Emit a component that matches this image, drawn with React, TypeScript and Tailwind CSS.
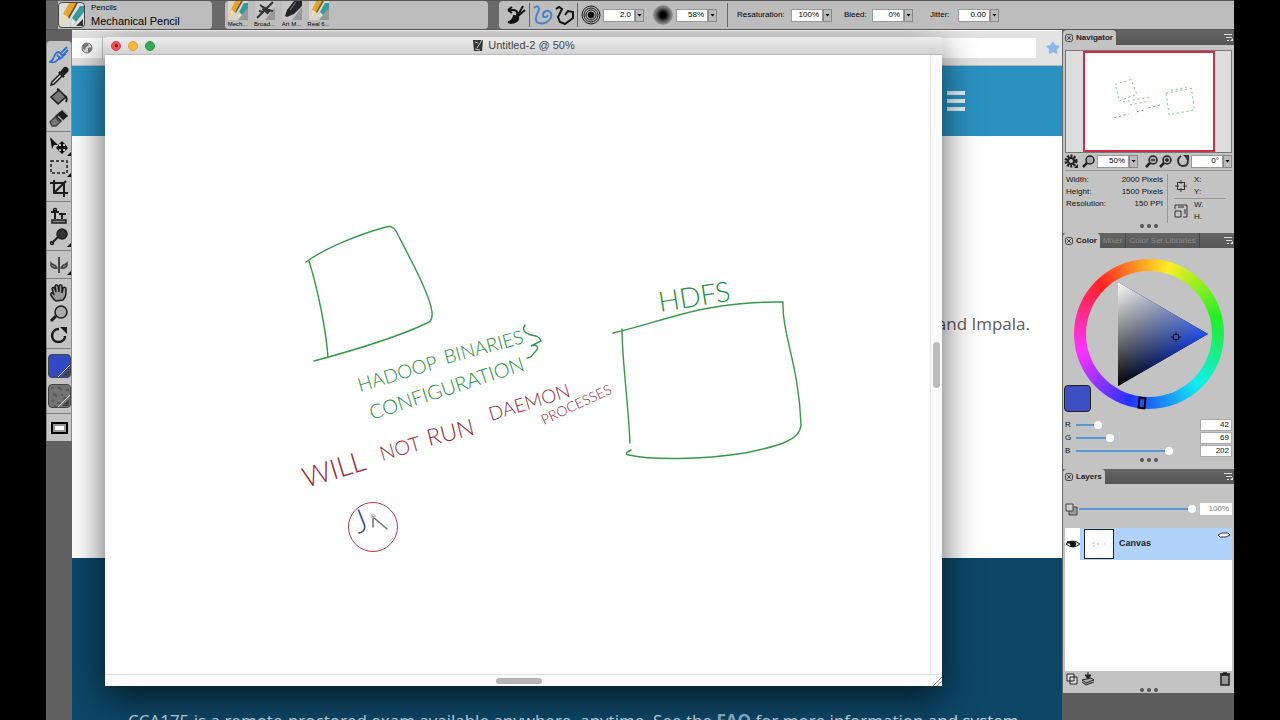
import type { ReactNode } from 'react';
import { Star } from 'lucide-react';

const swatches = [
  { name: 'Mech...', kind: 'pencil' },
  { name: 'Broad...', kind: 'airbrush' },
  { name: 'Art M...', kind: 'marker' },
  { name: 'Real 6...', kind: 'pencil' },
];

const channels = [
  { name: 'R', value: 42 },
  { name: 'G', value: 69 },
  { name: 'B', value: 202 },
];

function Svg({ size = 20, children }: { size?: number; children: ReactNode }) {
  return (
    <svg width={size} height={size} viewBox="0 0 20 20" fill="none" stroke="#1c1c1c" strokeWidth="1.5">
      {children}
    </svg>
  );
}

const toolGroups: { name: string; icon: ReactNode; more?: boolean }[][] = [
  [
    {
      name: 'Brush',
      icon: (
        <g stroke="#2f6fd6" strokeWidth="1.8">
          <path d="M18 2 12 8M19 5l-5 5M10 7c-3 0-4 2-5 5s-2 4-4 5c3 1 7 0 8-3M10 7l4 4c-1 2-3 3-5 3M8 10l3 3M17 9l-4 2" />
        </g>
      ),
    },
    {
      name: 'Dropper',
      icon: (
        <g>
          <path d="m11 8-8 8-1 3 3-1 8-8" fill="#ddd" />
          <path d="m10 6 5 5M12 7l3-4c2-2 4 0 3 2l-4 4z" fill="#1c1c1c" strokeWidth="2.5" />
        </g>
      ),
    },
    {
      name: 'Paint Bucket',
      icon: (
        <g>
          <path d="m2 10 8-7 7 7-8 7z" fill="#777" />
          <path d="m10 3-2-1M16 9c2 1 2 4 1 6" strokeWidth="2" />
        </g>
      ),
    },
    {
      name: 'Eraser',
      icon: (
        <g>
          <path d="m1 14 5-5 5 5-4 4H3z" fill="#777" stroke="#444" />
          <path d="m7 8 6-5 5 5-6 5z" fill="#1c1c1c" />
          <path d="m9 8 5 5M14 2l4 4" stroke="#aaa" />
        </g>
      ),
    },
  ],
  [
    {
      name: 'Layer Adjuster',
      more: true,
      icon: (
        <g fill="#111" stroke="none">
          <path d="m1 1 8 8-4 0-2 4z" />
          <path d="m13 5 3 3h-2v2h2V8l3 4-3 3v-2h-2v2h2l-3 3-3-3h2v-2h-2v2l-3-3 3-4v2h2V8h-2z" />
        </g>
      ),
    },
    {
      name: 'Rectangular Selection',
      more: true,
      icon: <path d="M2 4h16v12H2z" strokeDasharray="3 2" />,
    },
    {
      name: 'Crop',
      icon: <path d="M5 2v13h14M1 5h14v14M5 15 17 3" strokeWidth="2" />,
    },
  ],
  [
    {
      name: 'Cloner',
      icon: (
        <g>
          <path d="M3 14h14v3H3z" fill="#888" />
          <path d="M6 13V4M2 6h8M13 13V8M10 8h7" strokeWidth="2" />
          <circle cx="6" cy="4" r="1.5" />
        </g>
      ),
    },
    {
      name: 'Dodge',
      more: true,
      icon: (
        <g>
          <circle cx="13" cy="7" r="5" fill="#333" />
          <path d="m9 10-6 6" strokeWidth="2" />
          <circle cx="3" cy="16" r="1.5" />
        </g>
      ),
    },
  ],
  [
    {
      name: 'Mirror Painting',
      more: true,
      icon: (
        <g>
          <path d="M10 2v16" />
          <path d="M8 13C5 14 1 12 2 8c1 2 4 0 6 5zM12 13c3 1 7-1 6-5-1 2-4 0-6 5z" fill="#888" stroke="#444" />
        </g>
      ),
    },
  ],
  [
    {
      name: 'Grabber',
      icon: (
        <path
          d="M7 18c-3-2-6-6-5-8 1-1 3 1 3 2L3 6c0-2 2-2 3 0l1 3-1-6c1-2 2-1 3 0l1 6 0-6c1-2 3-1 3 0l0 7 1-5c1-1 3-1 3 1 0 5 0 8-3 11z"
          fill="#999"
        />
      ),
    },
    {
      name: 'Magnifier',
      icon: (
        <g>
          <circle cx="12" cy="8" r="6" fill="#aaa" />
          <path d="m7 12-5 5" strokeWidth="3" />
        </g>
      ),
    },
    {
      name: 'Rotate Page',
      icon: (
        <g>
          <path d="M10 4c-9 0-9 13-1 13 5 0 7-3 7-6" strokeWidth="2.5" />
          <path d="M11 2h7v7z" fill="#1c1c1c" stroke="none" />
        </g>
      ),
    },
  ],
];

function Toolbar() {
  return (
    <aside className="w-[26px] shrink-0 bg-[#606060] pt-[11px]">
      <div className="rounded-t border-x border-[#8b8b8b] bg-[#c3c3c3]">
        {toolGroups.map((group) => (
          <div key={group[0].name} className="flex flex-col border-b border-[#7d7d7d] py-[3px]">
            {group.map((tool) => (
              <button key={tool.name} aria-label={tool.name} className="relative flex h-[21px] items-center justify-center">
                <Svg>{tool.icon}</Svg>
                {tool.more && (
                  <span className="absolute right-0 bottom-0 h-1 w-1 bg-black [clip-path:polygon(100%_0,100%_100%,0_100%)]" />
                )}
              </button>
            ))}
          </div>
        ))}
        <div className="flex flex-col items-center gap-[6px] border-b border-[#7d7d7d] py-[5px]">
          <button aria-label="Main color" className="relative h-6 w-[23px] overflow-hidden rounded border border-[#444] bg-[#3348c5]">
            <Corner />
          </button>
          <button aria-label="Paper texture" className="relative h-6 w-[23px] overflow-hidden rounded border border-[#444] bg-[#747474]">
            <svg className="absolute inset-0" width="23" height="24" stroke="#595959" strokeWidth="2" fill="none">
              <path d="M2 3h3M9 2l4 3M17 5h3M4 9l4 2M12 10h2M3 17l2-2M8 18h4M14 14l3-2M5 21l3 1" />
            </svg>
            <Corner />
          </button>
        </div>
        <div className="py-[3px]">
          <button aria-label="Screen mode" className="flex h-[21px] w-full items-center justify-center">
            <span className="h-3 w-[17px] border-2 border-black bg-white outline-2 -outline-offset-4 outline-[#999]" />
          </button>
        </div>
      </div>
    </aside>
  );
}

function Corner() {
  return (
    <svg className="absolute right-0 bottom-0" width="12" height="12" viewBox="0 0 12 12">
      <path d="M0 12 12 0" stroke="#ddd" />
      <path d="M4 11h7V4z" fill="#444" />
    </svg>
  );
}

function BrushArt({ kind }: { kind: string }) {
  return (
    <svg width="20" height="19" viewBox="0 0 20 19">
      <rect width="20" height="19" fill={kind === 'pencil' ? '#d9d5cb' : '#c6c6c6'} />
      <path d="M10 19 20 6v13z" fill="#999" />
      {kind === 'pencil' && (
        <g>
          <path d="M7 0h6L7 11l-5 6 1-8z" fill="#e2a52d" />
          <path d="M13 0h2L8 12l-1-1z" fill="#76551f" />
          <path d="m3 9 4 2-5 6z" fill="#f3dfb4" />
          <path d="M16 2h4v5l-6 7-5 4 2-7z" fill="#359a9b" />
          <path d="m11 11 3 3-5 4z" fill="#f0e6cf" />
        </g>
      )}
      {kind === 'airbrush' && (
        <g stroke="#333" strokeWidth="2">
          <path d="M2 17 18 1M5 4l7 5 6 1M4 10l5 1" />
          <path d="M8 7l6 5" strokeWidth="4" />
        </g>
      )}
      {kind === 'marker' && (
        <g>
          <path d="M12 0h8v5l-8 8-7 3-2-1 2-6z" fill="#24242a" />
          <path d="m14 1-6 8" stroke="#888" />
        </g>
      )}
    </svg>
  );
}

function NumberField({ label, value }: { label: string; value: string }) {
  return (
    <div className="flex h-[13px] shrink-0">
      <input aria-label={label} defaultValue={value} className="w-8 border border-[#999] bg-white pr-[3px] text-right text-[8px] text-black" />
      <button aria-label={`${label} options`} className="flex w-[9px] items-center justify-center border border-[#888] bg-[#bbb]">
        <span className="h-[3px] w-[5px] shrink-0 bg-black [clip-path:polygon(0_0,100%_0,50%_100%)]" />
      </button>
    </div>
  );
}

function Separator() {
  return <span className="h-6 w-px shrink-0 bg-[#666]" />;
}

function PropertyBar() {
  return (
    <header className="flex h-[30px] shrink-0 border-t border-b border-t-[#555] border-b-[#555] bg-[#696969] pl-3 text-[8px] text-black">
      <button className="flex w-[154px] shrink-0 items-center gap-[6px] rounded-r bg-[#bdbdbd] text-left">
        <span className="relative h-[26px] w-[27px] overflow-hidden rounded border border-[#444] bg-[#ddd]">
          <svg width="25" height="25" viewBox="0 0 25 25">
            <path d="M10 0h7L9 14l-6 8 1-11z" fill="#e5a52e" />
            <path d="M17 0h2L10 16l-1-2z" fill="#76551f" />
            <path d="m4 11 5 3-6 8z" fill="#f3dfb4" />
            <path d="M21 3h4v6l-8 10-6 5 2-9z" fill="#359a9b" />
            <path d="m13 15 4 4-6 5z" fill="#f0e6cf" />
            <path d="M17 23h7v-7z" fill="#333" />
          </svg>
        </span>
        <span>
          <span className="block leading-3">Pencils</span>
          <span className="block text-[11px] leading-[14px]">Mechanical Pencil</span>
        </span>
      </button>

      <div className="ml-[13px] flex w-[263px] shrink-0 gap-1 rounded bg-[#bdbdbd] pl-px">
        {swatches.map((brush) => (
          <button key={brush.name} className="flex w-[23px] flex-col items-center text-[6px] leading-[8px] whitespace-nowrap">
            <BrushArt kind={brush.kind} />
            {brush.name}
          </button>
        ))}
      </div>

      <div className="ml-[11px] flex flex-1 items-center rounded-l bg-[#bdbdbd] pl-[7px]">
        <button aria-label="Reset brush" className="mr-[3px]">
          <svg width="20" height="20" viewBox="0 0 20 20" fill="none" stroke="#111" strokeWidth="2">
            <path d="M8 5H2M2 5l4-3M2 5l4 3M8 5c4 1 4 4 2 7M17 1l-5 9M19 5l-7 6-3 1" />
            <path d="m8 11 4 1c1 3-2 6-7 6l-3-1c4 0 5-3 6-6z" fill="#111" />
          </svg>
        </button>
        <Separator />
        <button aria-label="Freehand strokes" className="ml-[3px]">
          <svg width="20" height="20" viewBox="0 0 20 20" fill="none" stroke="#4b83c6" strokeWidth="2">
            <path d="M1 3c4-4 6 0 4 4s-4 10 1 11c8 2 14-5 12-10-2-4-8-2-8 2 0 3 4 3 5 0" />
          </svg>
        </button>
        <button aria-label="Straight line strokes" className="mr-[2px] ml-[2px]">
          <svg width="20" height="20" viewBox="0 0 20 20" fill="none" stroke="#111" strokeWidth="2">
            <path d="M1 4 4 2l3 2-4 8 2 5 5 2 8-6 0-6-5-1-3 4" />
          </svg>
        </button>
        <Separator />
        <span className="mr-[2px] ml-[3px]">
          <svg width="20" height="20" viewBox="0 0 20 20" fill="none" stroke="#111">
            <circle cx="10" cy="10" r="9" />
            <circle cx="10" cy="10" r="7" />
            <circle cx="10" cy="10" r="5" />
            <circle cx="10" cy="10" r="3" fill="#111" />
          </svg>
        </span>
        <NumberField label="Size" value="2.0" />
        <span className="mr-[3px] ml-[9px] h-5 w-5 rounded-full bg-[radial-gradient(circle,#000_20%,#666_50%,#999_70%)]" />
        <NumberField label="Opacity" value="58%" />
        <span className="mr-[9px] ml-[10px] flex">
          <Separator />
        </span>
        <span className="w-[54px]">Resaturation:</span>
        <NumberField label="Resaturation" value="100%" />
        <span className="ml-3 w-7">Bleed:</span>
        <NumberField label="Bleed" value="0%" />
        <span className="ml-[17px] w-7">Jitter:</span>
        <NumberField label="Jitter" value="0.00" />
      </div>
    </header>
  );
}

function Sketch() {
  return (
    <svg width="825" height="619" viewBox="105 55 825 619" fill="none" strokeLinecap="round" className="shrink-0">
      <g stroke="#369b48" strokeWidth="1.4">
        <path d="M306 262C325 248 360 234 386 227q6-2 10 4C412 262 430 295 432 312q1 9-5 11C400 336 355 350 314 361" />
        <path d="M309 261C318 290 326 330 328 357" />
        <path d="M613 333C660 323 700 301 783 302C782 335 799 365 801 425C800 440 780 446 745 453C700 460 650 460 629 455q-6-1 2-5" />
        <path d="M622 329C622 360 628 400 630 443" />
        <path d="M525 325c-4 6 1 8 6 10 5 1 8 1 10 6l-10 5c6-2 9 1 4 6-4 3-1 5-8 6" />
      </g>
      <g fill="#238f3c" className="font-['Lato'] text-[19px] font-light">
        <text transform="translate(360 392) rotate(-17)">HADOOP</text>
        <text transform="translate(446 364) rotate(-15)">BINARIES</text>
        <text transform="translate(372 420) rotate(-18)" className="text-[20px]">CONFIGURATION</text>
        <text transform="translate(660 312) rotate(-9)" className="text-[28px]">HDFS</text>
      </g>
      <g fill="#9d2636" className="font-['Lato'] text-[23px] font-light">
        <text transform="translate(306 488) rotate(-17)" className="text-[28px]">WILL</text>
        <text transform="translate(382 461) rotate(-16)" className="text-[20px]">NOT</text>
        <text transform="translate(429 446) rotate(-14)">RUN</text>
        <text transform="translate(491 421) rotate(-17)" className="text-[19px]">DAEMON</text>
        <text transform="translate(544 425) rotate(-25)" className="text-[14px]">PROCESSES</text>
      </g>
      <text transform="translate(358 534) rotate(-22)" fill="#344a9e" className="font-['Lato'] text-[32px] font-light">J</text>
      <path d="M373 527v-10l14 12" stroke="#777" strokeWidth="1.6" />
      <circle cx="373" cy="516" r="2" stroke="#bbb" />
      <circle cx="373" cy="527" r="24.5" stroke="#bd3340" />
    </svg>
  );
}

function Thumbnail() {
  return (
    <svg className="h-full w-full" viewBox="0 0 131 99" fill="none" strokeWidth="1" strokeDasharray="2 3">
      <g stroke="#7db487">
        <path d="M31 32 47 27l6 15-18 7zM83 41l26-5 3 22-26 5-3-22" />
        <path d="M88 38l16-3M39 50l26-5M46 53l20-4" />
      </g>
      <path d="M30 66l15-4M53 60l9-2M65 56l12-3" stroke="#b5697a" />
    </svg>
  );
}

function DocumentWindow() {
  return (
    <section className="absolute top-[7px] right-[120px] bottom-[34px] left-[33px] flex flex-col overflow-hidden rounded-t bg-white shadow-[0_12px_36px_rgba(0,0,0,0.65)]">
      <div className="flex h-[18px] shrink-0 items-center border-b border-[#bbb] bg-linear-to-b from-[#ededed] to-[#d2d2d2] px-[6px]">
        <div className="flex w-16 gap-[7px]">
          <button aria-label="Close" className="flex h-[10px] w-[10px] items-center justify-center rounded-full border border-[#cf4048] bg-[#f0535c]">
            <span className="h-[3px] w-[3px] rounded-full bg-[#640d12]" />
          </button>
          <button aria-label="Minimize" className="h-[10px] w-[10px] rounded-full border border-[#dda135] bg-[#f6b83c]" />
          <button aria-label="Zoom" className="h-[10px] w-[10px] rounded-full border border-[#2b9843] bg-[#34ad4e]" />
        </div>
        <h1 className="flex flex-1 items-center justify-center gap-1 pr-16 text-[11px] text-[#444]">
          <svg width="12" height="13" viewBox="0 0 12 13">
            <path d="M1 1h10l-1 11H2z" fill="#333" />
            <path d="M10 1 5 9M3 3l3 1M3 10l5 1" stroke="#ccc" />
          </svg>
          Untitled-2 @ 50%
        </h1>
      </div>
      <div className="flex min-h-0 flex-1">
        <div className="min-w-0 flex-1 overflow-hidden">
          <Sketch />
        </div>
        <div className="flex w-3 items-center justify-center border-l border-[#e6e6e6] bg-[#fafafa]">
          <span className="h-[46px] w-[7px] rounded-full bg-[#bcbcbc]" />
        </div>
      </div>
      <div className="flex h-3 shrink-0 items-center justify-center border-t border-[#e0e0e0] bg-[#fafafa]">
        <span className="ml-auto h-[6px] w-[46px] rounded-full bg-[#b5b5b5]" />
        <svg className="ml-auto" width="10" height="10" viewBox="0 0 10 10" stroke="#888">
          <path d="M1 10 10 1M5 10l5-5" />
        </svg>
      </div>
    </section>
  );
}

function Workspace() {
  return (
    <main className="relative flex min-w-0 flex-1 flex-col overflow-hidden">
      {/* Browser behind the drawing window */}
      <div className="flex h-9 shrink-0 items-center border-t border-b border-t-white border-b-[#b5b5b5] bg-[#e3e3e3]">
        <div className="flex h-5 min-w-0 flex-1 items-center bg-white pl-2">
          <svg width="14" height="14" viewBox="0 0 14 14">
            <circle cx="7" cy="7" r="5" fill="#ddd" stroke="#777" />
            <path d="M3 4l4-2 2 2-3 2-1 3-2-1zM8 7l4-1-1 4-3 2z" fill="#777" />
          </svg>
          <input aria-label="Address" className="ml-2 min-w-0 flex-1 border-l border-[#ccc]" />
        </div>
        <button aria-label="Bookmark" className="ml-2 flex w-[18px] justify-center">
          <Star size={14} fill="#86b8ee" color="#86b8ee" />
        </button>
      </div>
      <div className="flex h-[70px] shrink-0 items-center justify-end bg-[#2a91c1] pr-[97px]">
        <button aria-label="Menu" className="flex w-[18px] flex-col gap-[4px]">
          <span className="h-[4px] bg-[#e4f1f7]" />
          <span className="h-[4px] bg-[#e4f1f7]" />
          <span className="h-[4px] bg-[#e4f1f7]" />
        </button>
      </div>
      <div className="flex flex-1 items-center justify-end bg-white pr-8 pb-[46px] font-['Open_Sans'] text-[17px] text-[#5c5c5c]">
        <p>and Impala.</p>
      </div>
      <footer className="h-[162px] shrink-0 bg-[#0d4767] px-14 pt-[151px] font-['Open_Sans'] text-[17px] leading-6 whitespace-nowrap text-[#c3d8e4]">
        <p>
          CCA175 is a remote-proctored exam available anywhere, anytime. See the{' '}
          <a href="#faq" className="font-bold text-[#8ab5cd]">FAQ</a> for more information and system
        </p>
      </footer>
      <DocumentWindow />
    </main>
  );
}

function PanelHeader({ title, others = [] }: { title: string; others?: string[] }) {
  return (
    <div className="flex h-[15px] shrink-0 items-stretch bg-linear-to-b from-[#666] to-[#555] text-[8px] font-bold">
      <button className="flex items-center gap-[3px] rounded-t bg-[#c3c3c3] pr-[3px] pl-[2px] text-[#222]">
        <svg width="8" height="8" viewBox="0 0 8 8" fill="none" stroke="#444">
          <rect x=".5" y=".5" width="7" height="7" rx="2" />
          <path d="m2 2 4 4M6 2 2 6" />
        </svg>
        {title}
      </button>
      {others.map((name) => (
        <button key={name} className="border-r border-[#444] px-[3px] font-normal text-[#8c8c8c]">
          {name}
        </button>
      ))}
      <button aria-label={`${title} menu`} className="mr-px ml-auto">
        <svg width="9" height="9" viewBox="0 0 9 9" stroke="#ddd">
          <path d="M0 1.5h8M2 4.5h6M3 7.5h2" />
          <path d="M6 8h3V5z" fill="#ddd" stroke="none" />
        </svg>
      </button>
    </div>
  );
}

function Dots() {
  return (
    <div className="flex h-[6px] items-center justify-center gap-[3px]">
      <span className="h-1 w-1 rounded-full bg-[#555]" />
      <span className="h-1 w-1 rounded-full bg-[#555]" />
      <span className="h-1 w-1 rounded-full bg-[#555]" />
    </div>
  );
}

function Lens({ sign }: { sign?: string }) {
  return (
    <svg width="13" height="13" viewBox="0 0 13 13" fill="none" stroke="#222" strokeWidth="1.5">
      <circle cx="8" cy="5" r="4" fill="#aaa" />
      <path d="m5 8-4 4" strokeWidth="2.5" />
      {sign && <path d={sign} />}
    </svg>
  );
}

function Navigator() {
  return (
    <section>
      <PanelHeader title="Navigator" />
      <div className="mx-[2px] mt-[5px] flex h-[103px] justify-center border border-[#777] bg-[#dcdcdc]">
        <div className="h-[101px] w-[132px] border-2 border-[#d22d45] bg-white">
          <Thumbnail />
        </div>
      </div>
      <div className="flex h-4 items-center pl-px">
        <button aria-label="Navigator settings">
          <svg width="14" height="14" viewBox="0 0 14 14" fill="none" stroke="#222">
            <circle cx="7" cy="7" r="5" strokeWidth="3" strokeDasharray="2 1.2" />
            <circle cx="7" cy="7" r="3" strokeWidth="2" />
            <path d="M10 14h4v-4z" fill="#222" stroke="none" />
          </svg>
        </button>
        <span className="mr-[2px] ml-1"><Lens /></span>
        <NumberField label="Zoom level" value="50%" />
        <button aria-label="Zoom out" className="ml-[7px]"><Lens sign="M6 5h4" /></button>
        <button aria-label="Zoom in" className="ml-px"><Lens sign="M6 5h4M8 3v4" /></button>
        <button aria-label="Reset rotation" className="mr-px ml-1">
          <svg width="14" height="14" viewBox="0 0 14 14" fill="none" stroke="#333" strokeWidth="2">
            <path d="M5 2C0 5 2 12 7 12s6-5 4-8" />
            <path d="M7 1h6v6z" fill="#333" stroke="none" />
          </svg>
        </button>
        <NumberField label="Rotation" value="0°" />
      </div>
      <div className="mx-[2px] mt-px flex border-t border-[#999] pt-[3px] text-[8px] leading-3 text-[#111]">
        <dl className="grid w-[98px] grid-cols-2 content-start pl-px">
          <dt>Width:</dt>
          <dd className="text-right whitespace-nowrap">2000 Pixels</dd>
          <dt>Height:</dt>
          <dd className="text-right whitespace-nowrap">1500 Pixels</dd>
          <dt>Resolution:</dt>
          <dd className="text-right whitespace-nowrap">150 PPI</dd>
        </dl>
        <div className="ml-1 flex-1 border-l border-[#999] pr-[6px] pl-[6px]">
          <div className="flex items-center gap-[6px] border-b border-[#999]">
            <svg width="14" height="14" viewBox="0 0 14 14" fill="none" stroke="#333">
              <rect x="3.5" y="3.5" width="7" height="7" />
              <path d="M7 1v4M7 9v4M1 7h4M9 7h4" />
            </svg>
            <p>X:<br />Y:</p>
          </div>
          <div className="flex items-center gap-[6px]">
            <svg width="14" height="14" viewBox="0 0 14 14" fill="none" stroke="#333">
              <path d="M1 5V1h12v12h-4M1 7v6h6V7zM4 3h6M11 5v5" />
            </svg>
            <p>W.<br />H.</p>
          </div>
        </div>
      </div>
      <Dots />
    </section>
  );
}

function Slider({ id, value, max }: { id: string; value: number; max: number }) {
  const stop = `calc(4px + (100% - 8px) * ${value / max})`;
  return (
    <input
      id={id}
      type="range"
      max={max}
      defaultValue={value}
      className="h-2 min-w-0 flex-1 appearance-none bg-[length:100%_2px] bg-center bg-no-repeat [&::-webkit-slider-thumb]:h-2 [&::-webkit-slider-thumb]:w-2 [&::-webkit-slider-thumb]:appearance-none [&::-webkit-slider-thumb]:rounded-full [&::-webkit-slider-thumb]:bg-white"
      style={{ backgroundImage: `linear-gradient(to right, #5a98d6 ${stop}, transparent ${stop})` }}
    />
  );
}

function ColorPanel() {
  return (
    <section className="mt-1">
      <PanelHeader title="Color" others={['Mixer', 'Color Set Libraries']} />
      <div className="relative pt-[11px]">
        <div className="mx-auto flex h-[150px] w-[150px] items-center justify-center rounded-full bg-[conic-gradient(from_-44deg,#f22,#fe2,#2e2,#1ee,#23f,#f3f,#f22)]">
          <div className="h-[126px] w-[126px] rounded-full bg-[#c3c3c3]">
            <svg width="126" height="126" viewBox="0 0 126 126">
              <defs>
                <linearGradient id="hue" gradientUnits="userSpaceOnUse" x1="32" y1="0" x2="122" y2="0">
                  <stop stopColor="#000" />
                  <stop offset="1" stopColor="#1f50f5" />
                </linearGradient>
                <linearGradient id="tint" gradientUnits="userSpaceOnUse" x1="77" y1="89" x2="32" y2="11">
                  <stop stopColor="#000" />
                  <stop offset="1" stopColor="#fff" />
                </linearGradient>
              </defs>
              <g className="isolate">
                <path d="M32 11v104l90-52z" fill="url(#hue)" />
                <path d="M32 11v104l90-52z" fill="url(#tint)" className="mix-blend-screen" />
              </g>
              <g fill="none" stroke="#111">
                <circle cx="90" cy="66" r="3" />
                <path d="M90 61v3M90 68v3M85 66h3M92 66h3" />
              </g>
            </svg>
          </div>
        </div>
        <span className="absolute top-[149px] left-[75px] h-3 w-2 rotate-6 border-2 border-black" />
        <button aria-label="Current color" className="absolute top-[137px] left-px h-[27px] w-[27px] rounded border border-[#222] bg-[#3d50c3]" />
        <div className="mt-[9px] pr-[2px] pl-[2px] text-[8px] text-[#111]">
          {channels.map((c) => (
            <div key={c.name} className="flex h-[13px] items-center">
              <label htmlFor={c.name} className="w-[11px]">{c.name}</label>
              <Slider id={c.name} value={c.value} max={255} />
              <input aria-label={`${c.name} value`} defaultValue={c.value} className="ml-1 h-3 w-8 border border-[#aaa] bg-white pr-[2px] text-right" />
            </div>
          ))}
        </div>
        <Dots />
      </div>
    </section>
  );
}

function Layers() {
  return (
    <section className="mt-[6px]">
      <PanelHeader title="Layers" />
      <div className="flex h-11 items-center pt-[6px] pr-[2px] pl-[2px]">
        <label htmlFor="layer-opacity" aria-label="Layer opacity" className="w-[14px]">
          <svg width="13" height="13" viewBox="0 0 13 13" fill="none" stroke="#444">
            <path d="M4 4h8v8H4z" fill="#999" />
            <path d="M1 1h7v7H1z" fill="#ccc" />
          </svg>
        </label>
        <Slider id="layer-opacity" value={100} max={100} />
        <input aria-label="Opacity value" defaultValue="100%" className="ml-1 h-3 w-8 bg-white pr-[3px] text-right text-[8px] text-[#777]" />
      </div>
      <div className="mx-[2px] h-[143px] bg-white">
        <div className="flex h-8 items-center bg-[#b1d3fb]">
          <button aria-label="Toggle Canvas" className="flex h-full w-[15px] items-center justify-center bg-white">
            <svg width="14" height="8" viewBox="0 0 14 8">
              <path d="M0 4q6-6 14 0-7 6-14 0" fill="#ddd" stroke="#222" />
              <circle cx="7" cy="4" r="3" fill="#111" />
              <path d="M1 2l5 1" stroke="#111" strokeWidth="2" />
            </svg>
          </button>
          <span className="ml-1 flex h-[30px] w-[30px] items-center justify-center border border-[#222] bg-white">
            <svg width="20" height="10" viewBox="0 0 20 10" fill="none" stroke="#bbb">
              <path d="M3 4h3M4 7h2M8 5h2M15 5h1" />
            </svg>
          </span>
          <span className="ml-[5px] flex-1 text-[9px] font-bold text-[#222]">Canvas</span>
          <svg className="mt-1 mr-px self-start" width="14" height="6" viewBox="0 0 14 6" fill="#fff" stroke="#333">
            <path d="M1 3 5 1h6l2 2-4 2H3z" />
          </svg>
        </div>
      </div>
      <div className="flex h-4 items-center px-[3px]">
        <button aria-label="New layer">
          <svg width="12" height="12" viewBox="0 0 12 12" fill="#ddd" stroke="#222">
            <path d="M4 4h7v7H4zM1 1h7v7H1z" />
          </svg>
        </button>
        <button aria-label="Drop layer" className="ml-[3px]">
          <svg width="14" height="14" viewBox="0 0 14 14" fill="#aaa" stroke="#222">
            <path d="m1 8 9-2 3 2-8 3zM1 10l4 3 8-3" />
            <path d="M7 0v4M4 3l3 4 3-4z" fill="#222" />
          </svg>
        </button>
        <button aria-label="Delete layer" className="ml-auto">
          <svg width="12" height="14" viewBox="0 0 12 14" fill="#999" stroke="#222">
            <path d="M2 3h8v10H2zM1 2h10M4 1h4" strokeWidth="1.5" />
          </svg>
        </button>
      </div>
      <Dots />
    </section>
  );
}

export default function App() {
  return (
    <div className="flex h-screen flex-col overflow-hidden bg-black px-[46px] font-['Liberation_Sans',sans-serif]">
      <PropertyBar />
      <div className="flex min-h-0 flex-1">
        <Toolbar />
        <Workspace />
        <aside className="w-[172px] shrink-0 bg-[#5c5c5c]">
          <div className="border-l border-[#666] bg-[#c3c3c3]">
            <Navigator />
            <ColorPanel />
            <Layers />
          </div>
        </aside>
      </div>
    </div>
  );
}
